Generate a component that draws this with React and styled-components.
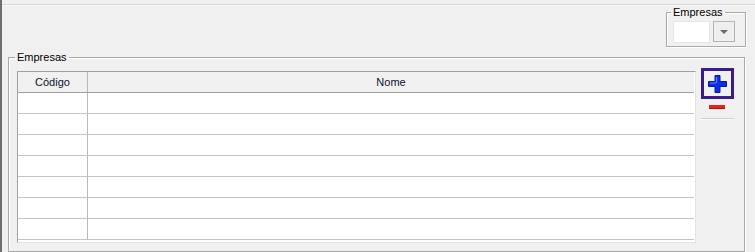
import React from "react";
import styled, { createGlobalStyle } from "styled-components";

const GlobalStyle = createGlobalStyle`
  html, body {
    margin: 0;
    padding: 0;
    background: #f0f0f0;
  }
  body {
    font-family: "Liberation Sans", "DejaVu Sans", Arial, sans-serif;
    font-size: 11px;
    color: #000;
  }
`;

const Page = styled.div`
  width: 755px;
  height: 252px;
  box-sizing: border-box;
  border-left: 2px solid #6e6e6e;
  background: #f0f0f0;
  overflow: hidden;
  display: flex;
  flex-direction: column;
`;

const TopRule = styled.div`
  margin-top: 4px;
  height: 1px;
  background: #d6d6d6;
  box-shadow: 0 1px 0 #fafafa;
`;

const TopBar = styled.div`
  display: flex;
  justify-content: flex-end;
  padding-right: 9px;
  margin-top: 1px;
`;

const Group = styled.fieldset`
  margin: 0;
  min-width: 0;
  border: 1px solid #a9a9a9;
  box-shadow: inset 1px 1px 0 #fff, 1px 1px 0 #fff;
  padding: ${(p) => p.$pad};
`;

const Legend = styled.legend`
  margin-left: -2px;
  padding: 0 2px;
  line-height: 13px;
  font-size: 11px;
`;

const Combo = styled.div`
  display: flex;
  gap: 3px;
`;

const ComboInput = styled.div`
  width: 35px;
  height: 20px;
  background: #fff;
  border: 1px solid #e6e6e6;
`;

const ComboButton = styled.div`
  width: 20px;
  height: 19px;
  border: 1px solid #b4b4b4;
  background: #efefef;
  display: flex;
  align-items: center;
  justify-content: center;

  &::after {
    content: "";
    border-left: 4px solid transparent;
    border-right: 4px solid transparent;
    border-top: 4px solid #6a6a6a;
  }
`;

const MainGroup = styled(Group)`
  margin: 4px 10px 0 6px;
  flex: 1;
`;

const Content = styled.div`
  display: flex;
  align-items: flex-start;
  gap: 4px;
  margin-top: 4px;
`;

const Grid = styled.div`
  flex: 1;
  background: #fff;
  border-left: 1px solid #a0a0a0;
  border-top: 1px solid #a0a0a0;
  border-right: 1px solid #e3e3e3;
  border-bottom: 1px solid #e3e3e3;
  padding: 0 1px 2px 0;
  margin-top: 3px;
`;

const Row = styled.div`
  display: grid;
  grid-template-columns: 70px 1fr;
  height: 20px;
  border-bottom: 1px solid ${(p) => (p.$head ? "#a0a0a0" : "#c4c4c4")};
  background: ${(p) => (p.$head ? "#f0f0f0" : "#fff")};
`;

const Cell = styled.div`
  display: flex;
  align-items: center;
  justify-content: center;
  font-size: 11px;
  color: #101030;
  border-right: ${(p) => (p.$first ? "1px solid #b8b8b8" : "none")};
`;

const Side = styled.div`
  width: 34px;
  display: flex;
  flex-direction: column;
  align-items: center;
`;

const AddButton = styled.div`
  width: 27px;
  height: 25px;
  border: 3px solid #3b1a8a;
  margin-left: 1px;
  display: flex;
  align-items: center;
  justify-content: center;
`;

const RemoveBar = styled.div`
  width: 16px;
  height: 4px;
  margin-top: 6px;
  background: #e8231c;
  box-shadow: inset 0 -1px 0 #b0120c;
`;

const Separator = styled.div`
  width: 33px;
  height: 1px;
  margin-top: 9px;
  background: #cfcfcf;
  box-shadow: 0 1px 0 #fafafa;
`;

const rows = Array.from({ length: 7 });

export default function App() {
  return (
    <>
      <GlobalStyle />
      <Page>
        <TopRule />
        <TopBar>
          <Group $pad="2px 10px 3px 6px">
            <Legend>Empresas</Legend>
            <Combo>
              <ComboInput />
              <ComboButton />
            </Combo>
          </Group>
        </TopBar>
        <MainGroup $pad="0 10px 0 8px">
          <Legend>Empresas</Legend>
          <Content>
            <Grid>
              <Row $head>
                <Cell $first>Código</Cell>
                <Cell>Nome</Cell>
              </Row>
              {rows.map((_, i) => (
                <Row key={i}>
                  <Cell $first />
                  <Cell />
                </Row>
              ))}
            </Grid>
            <Side>
              <AddButton>
                <svg width="19" height="18" viewBox="0 0 19 18">
                  <path
                    d="M7 0.5h5v6h6.5v5h-6.5v6h-5v-6h-6.5v-5h6.5z"
                    fill="#0a2cf0"
                    stroke="#081a90"
                    strokeWidth="1"
                  />
                  <path d="M8.5 2v6M2 8h6" stroke="#5a82ff" strokeWidth="1.2" />
                </svg>
              </AddButton>
              <RemoveBar />
              <Separator />
            </Side>
          </Content>
        </MainGroup>
      </Page>
    </>
  );
}
